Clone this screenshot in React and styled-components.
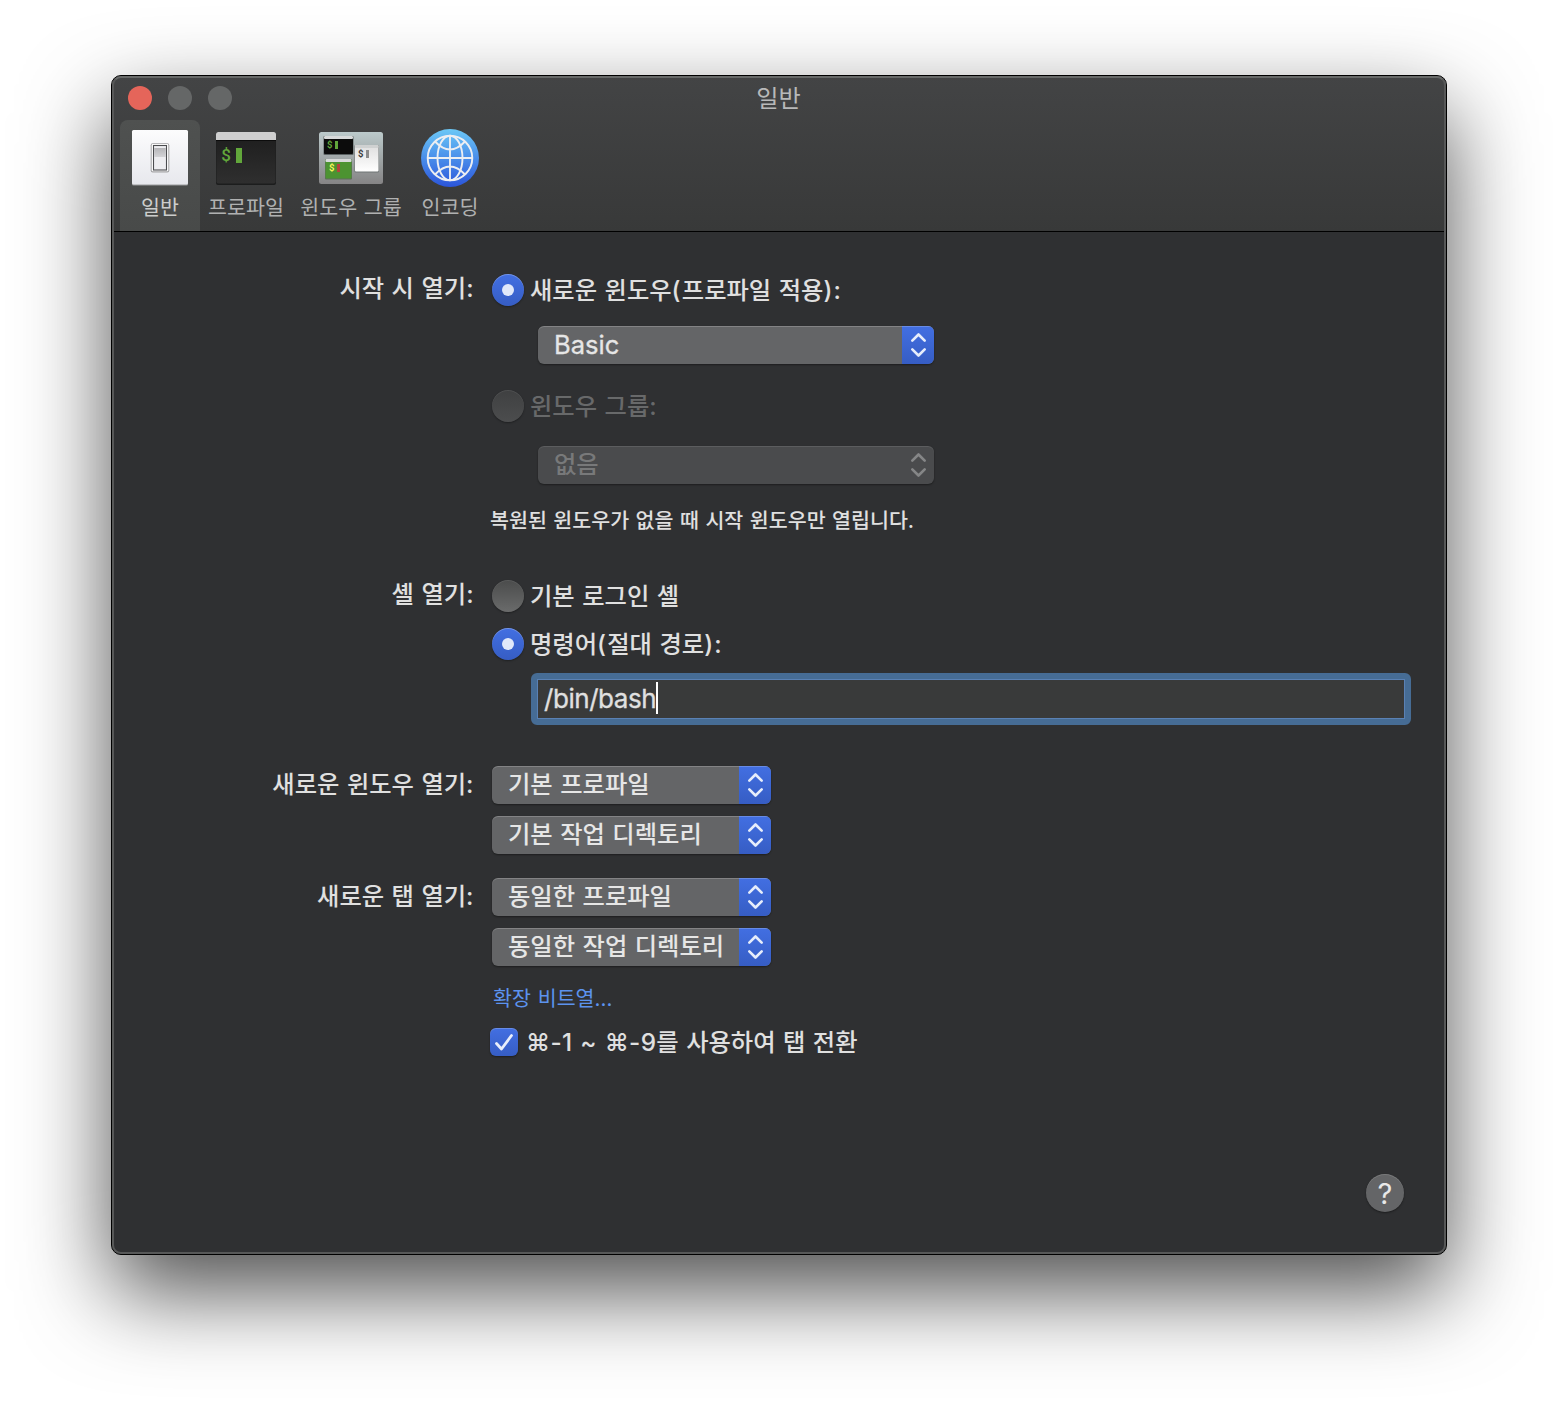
import React from 'react';
import styled, { createGlobalStyle, css } from 'styled-components';

const GlobalStyle = createGlobalStyle`
  * { box-sizing: border-box; }
  html, body { margin: 0; padding: 0; background: #fff; }
  body {
    font-family: Inter, "Noto Sans CJK KR", sans-serif;
    -webkit-font-smoothing: antialiased;
    overflow: hidden;
  }
`;

const Desktop = styled.main`
  height: 1402px;
  padding: 75px 111px 0;
  background: #fff;
  overflow: hidden;
`;

const Window = styled.section`
  position: relative;
  width: 1336px;
  height: 1180px;
  border: 1px solid #000;
  border-radius: 10px;
  background: #2f3032;
  color: #e0e0e0;
  box-shadow: 0 37px 88px rgba(0, 0, 0, 0.69);

  &::after {
    content: '';
    position: absolute;
    inset: 0;
    border: 2px solid #575858;
    border-top-color: #686a69;
    border-radius: 9px;
    pointer-events: none;
  }
`;

const Header = styled.header`
  height: 156px;
  border-bottom: 1px solid #000;
  border-radius: 9px 9px 0 0;
  background: linear-gradient(#434445, #383939);
`;

const TitleBar = styled.div`
  display: grid;
  grid-template-columns: 1fr auto 1fr;
  align-items: center;
  height: 44px;
  padding: 0 17px 0 16px;
`;

const Lights = styled.div`
  display: flex;
  gap: 16px;
`;

const Light = styled.span`
  width: 24px;
  height: 24px;
  border-radius: 50%;
  background: ${({ $color }) => $color};
`;

const Title = styled.h1`
  margin: 0;
  padding-top: 2px;
  font-size: 24.2px;
  font-weight: 400;
  line-height: 36px;
  color: #b8b9b9;
`;

const Toolbar = styled.nav`
  display: flex;
  height: 111px;
  padding-left: 8px;
`;

const Tab = styled.div`
  display: flex;
  flex-direction: column;
  align-items: center;
  width: ${({ $width }) => $width}px;
  padding-top: 6px;
  border-radius: 8px 8px 0 0;
  color: ${({ $active }) => ($active ? '#cccdcc' : '#b0b1b1')};
  ${({ $active }) => $active && css`background: linear-gradient(#4f5150, #484a49);`}
`;

const TabLabel = styled.span`
  margin-top: 3px;
  font-size: 20.6px;
  line-height: 30px;
  word-spacing: 1px;
  white-space: nowrap;
`;

const Body = styled.div`
  padding-top: 42px;
`;

const Section = styled.div`
  display: grid;
  grid-template-columns: 362px 1fr;
  column-gap: 16px;
  margin-top: ${({ $top = 0 }) => $top}px;
`;

const labelText = css`
  font-size: 24.3px;
  font-weight: 500;
  word-spacing: 1px;
  white-space: nowrap;
`;

const Label = styled.span`
  ${labelText}
  line-height: ${({ $line = 28 }) => $line}px;
  height: 28px;
  padding-right: 0.5px;
  text-align: right;
`;

const Controls = styled.div`
  display: flex;
  flex-direction: column;
  align-items: flex-start;
`;

const RadioRow = styled.label`
  ${labelText}
  display: flex;
  align-items: center;
  gap: 6px;
  height: 32px;
  line-height: 32px;
  margin: ${({ $top = 0 }) => $top}px 0 0 2px;
  color: ${({ $disabled }) => ($disabled ? '#68696a' : 'inherit')};
`;

const Paren = styled.span`
  letter-spacing: 1.2px;
`;

const radioFill = {
  on: 'linear-gradient(#426fe2, #365dc4)',
  off: 'linear-gradient(#4b4c4c, #6a6b6b)',
  disabled: 'linear-gradient(#3f4041, #4c4d4e)',
};

const RadioDot = styled.span`
  display: grid;
  place-items: center;
  width: 32px;
  height: 32px;
  border-radius: 50%;
  background: ${({ $state }) => radioFill[$state]};
  box-shadow: 0 1px 2px rgba(0, 0, 0, 0.35),
    inset 0 1px 0 rgba(255, 255, 255, ${({ $state }) => ($state === 'on' ? 0.25 : 0.08)});

  &::after {
    content: '';
    width: 12px;
    height: 12px;
    border-radius: 50%;
    background: ${({ $state }) => ($state === 'on' ? '#e0e8fa' : 'transparent')};
  }
`;

const SelectBox = styled.div`
  display: flex;
  justify-content: space-between;
  width: ${({ $width }) => $width}px;
  height: 38px;
  margin: ${({ $top = 0 }) => $top}px 0 0 ${({ $left = 2 }) => $left}px;
  padding-left: 16px;
  overflow: hidden;
  border-radius: 6px;
  background: ${({ $disabled }) => ($disabled ? '#4a4b4d' : '#646567')};
  color: ${({ $disabled }) => ($disabled ? '#78797a' : '#e6e6e6')};
  box-shadow: 0 1px 2px rgba(0, 0, 0, 0.4),
    inset 0 1px 0 rgba(255, 255, 255, ${({ $disabled }) => ($disabled ? 0.1 : 0.2)});
`;

const SelectText = styled.span`
  ${labelText}
  line-height: 36px;
  ${({ $latin }) => $latin && css`
    font-size: 25.5px;
    -webkit-text-stroke: 0.3px currentColor;
    font-weight: 400;
    line-height: 38px;
  `}
`;

const Stepper = styled.span`
  width: 32px;
  height: 38px;
  background: ${({ $disabled }) => ($disabled ? 'none' : 'linear-gradient(#426fe2, #365dc4)')};
  color: ${({ $disabled }) => ($disabled ? '#858687' : '#e6edfb')};
  box-shadow: ${({ $disabled }) => ($disabled ? 'none' : 'inset 0 1px 0 rgba(255, 255, 255, 0.2)')};
`;

const Note = styled.p`
  margin: 25px 0 -1px;
  font-size: 20.6px;
  font-weight: 500;
  line-height: 24px;
  word-spacing: 1px;
  white-space: nowrap;
`;

const PathField = styled.div`
  display: flex;
  align-items: center;
  width: 880px;
  height: 52px;
  margin: 13px 0 0 41px;
  padding: 0 7px;
  border: 6px solid #466c95;
  border-radius: 6px;
  background: #393a3a;
  box-shadow: inset 0 0 0 1px #5a81b4;
  font-size: 26px;
  line-height: 32px;
  letter-spacing: -0.45px;
  -webkit-text-stroke: 0.3px currentColor;
`;

const Caret = styled.span`
  width: 2px;
  height: 32px;
  margin-top: -2px;
  background: #fff;
`;

const Link = styled.a`
  margin: 21px 0 -1px 3px;
  font-size: 20.6px;
  line-height: 24px;
  word-spacing: 1px;
  color: #5c93ee;
`;

const CheckRow = styled.label`
  ${labelText}
  display: flex;
  align-items: center;
  gap: 8px;
  height: 28px;
  margin-top: 18px;
  line-height: 28px;
`;

const Shortcut = styled.span`
  letter-spacing: 0.35px;
`;

const CheckBox = styled.span`
  width: 28px;
  height: 28px;
  border-radius: 6px;
  background: linear-gradient(#426fe2, #365dc4);
  box-shadow: 0 1px 2px rgba(0, 0, 0, 0.4), inset 0 1px 0 rgba(255, 255, 255, 0.2);
`;

const Footer = styled.footer`
  display: flex;
  justify-content: flex-end;
  padding: 118px 42px 0 0;
`;

const HelpButton = styled.span`
  width: 38px;
  height: 38px;
  border-radius: 50%;
  background: #646567;
  box-shadow: 0 1px 2px rgba(0, 0, 0, 0.4), inset 0 1px 0 rgba(255, 255, 255, 0.15);
  font-size: 29px;
  line-height: 39px;
  text-align: center;
  color: #e8e8e8;
`;

const Icon = styled.svg`
  display: block;
  flex: none;
`;

function SwitchIcon() {
  return (
    <Icon width="64" height="64" viewBox="0 0 64 64">
      <defs>
        <linearGradient id="plate" x1="0" y1="0" x2="0" y2="1">
          <stop offset="0" stopColor="#fcfcfd" />
          <stop offset="1" stopColor="#e7e8ed" />
        </linearGradient>
        <linearGradient id="rocker" x1="0" y1="0" x2="0" y2="1">
          <stop offset="0" stopColor="#b5b5b8" />
          <stop offset="1" stopColor="#d3d3d6" />
        </linearGradient>
      </defs>
      <rect x="4" y="5" width="56" height="54.5" rx="1.5" fill="#9a9b9c" />
      <rect x="4" y="4" width="56" height="54.5" rx="1.5" fill="url(#plate)" />
      <rect x="22.7" y="17.2" width="18.600" height="29.300" rx="2" fill="#a4a4a6" />
      <rect x="23.7" y="18" width="16.600" height="27.300" rx="1" fill="#fff" />
      <rect x="25.5" y="19.5" width="13" height="24.500" fill="#ededf0" stroke="#4b4c4f" strokeWidth="1.1" />
      <rect x="26.2" y="22" width="11.6" height="9" fill="url(#rocker)" />
    </Icon>
  );
}

function ProfileIcon() {
  return (
    <Icon width="64" height="64" viewBox="0 0 64 64">
      <defs>
        <linearGradient id="term" x1="0" y1="0" x2="0" y2="1">
          <stop offset="0" stopColor="#1e1e1e" />
          <stop offset="1" stopColor="#2f2f2f" />
        </linearGradient>
      </defs>
      <rect x="2" y="7" width="60" height="52" rx="2" fill="#1c1d1d" />
      <rect x="2.5" y="10" width="59" height="47.500" rx="2" fill="url(#term)" />
      <path d="M2 14V8.500Q2 6 4.500 6H59.500Q62 6 62 8.500V14Z" fill="#cfcfcf" />
      <rect x="2" y="14" width="60" height="1" fill="#0c0c0c" />
      <text x="7.300" y="35" fontFamily="Roboto" fontWeight="500" fontSize="17" fill="#62a73b">$</text>
      <rect x="22" y="22" width="6" height="15" fill="#62a73b" />
    </Icon>
  );
}

function GroupsIcon() {
  return (
    <Icon width="64" height="64" viewBox="0 0 64 64">
      <defs>
        <linearGradient id="desk" x1="0" y1="0" x2="0" y2="1">
          <stop offset="0" stopColor="#bccacb" />
          <stop offset="1" stopColor="#858485" />
        </linearGradient>
        <linearGradient id="paper" x1="0" y1="0" x2="0" y2="1">
          <stop offset="0" stopColor="#dedede" />
          <stop offset="1" stopColor="#fff" />
        </linearGradient>
      </defs>
      <rect x="0" y="6" width="64" height="52" rx="2.500" fill="url(#desk)" />
      <rect x="4.500" y="10" width="30" height="19" rx="1" fill="#5b6263" />
      <rect x="5" y="10" width="29" height="18" rx="1" fill="#0c0c0c" />
      <rect x="5" y="10" width="29" height="3" rx="1" fill="#d8dada" />
      <text x="8" y="22.300" fontFamily="Roboto" fontWeight="700" fontSize="9.500" fill="#62a73b">$</text>
      <rect x="16" y="15" width="3" height="8" fill="#62a73b" />
      <rect x="35.500" y="19" width="24.500" height="27.500" rx="1" fill="#6f7575" />
      <rect x="36" y="19" width="23.500" height="26.500" rx="1" fill="url(#paper)" />
      <rect x="36" y="19" width="23.500" height="3" rx="1" fill="#cfd1d1" />
      <text x="39" y="31.300" fontFamily="Roboto" fontWeight="700" fontSize="9.500" fill="#3a3a3a">$</text>
      <rect x="47" y="24" width="3" height="8" fill="#8b8b8b" />
      <rect x="6" y="33" width="27" height="20.500" rx="1" fill="#5f6a5c" />
      <rect x="6.500" y="33" width="26" height="19.500" rx="1" fill="#4c9331" />
      <rect x="6.500" y="33" width="26" height="3" rx="1" fill="#d8dada" />
      <text x="10" y="45.300" fontFamily="Roboto" fontWeight="700" fontSize="9.500" fill="#f8f85a">$</text>
      <rect x="18" y="38" width="3" height="8" fill="#b5443c" />
    </Icon>
  );
}

function GlobeIcon() {
  return (
    <Icon width="64" height="64" viewBox="0 0 64 64">
      <defs>
        <linearGradient id="sea" x1="0" y1="0" x2="0" y2="1">
          <stop offset="0" stopColor="#6cc8f6" />
          <stop offset="0.5" stopColor="#4a8eea" />
          <stop offset="1" stopColor="#2b55da" />
        </linearGradient>
      </defs>
      <circle cx="32" cy="32" r="29" fill="url(#sea)" />
      <g fill="none" stroke="#eceef2" strokeWidth="1.900">
        <circle cx="32" cy="32" r="22.300" />
        <ellipse cx="32" cy="32" rx="12.500" ry="22.300" />
        <path d="M32 9.700V54.300M9.700 32H54.300M17 15.500Q32 31.500 47 15.500M17 48.500Q32 32.500 47 48.500" />
      </g>
    </Icon>
  );
}

function Radio({ state, top, children }) {
  return (
    <RadioRow $top={top} $disabled={state === 'disabled'}>
      <RadioDot $state={state} />
      <span>{children}</span>
    </RadioRow>
  );
}

function Select({ width = 279, top, left, disabled, latin, children }) {
  return (
    <SelectBox $width={width} $top={top} $left={left} $disabled={disabled}>
      <SelectText $latin={latin}>{children}</SelectText>
      <Stepper $disabled={disabled}>
        <Icon width="32" height="38" viewBox="0 0 32 38" fill="none" stroke="currentColor" strokeWidth="2.600" strokeLinecap="round" strokeLinejoin="round">
          <path d="M10.300 14.700L16.500 8.500L22.700 14.700M10.300 23.300L16.500 29.500L22.700 23.300" />
        </Icon>
      </Stepper>
    </SelectBox>
  );
}

const tabs = [
  { label: '일반', width: 80, icon: SwitchIcon, active: true },
  { label: '프로파일', width: 92, icon: ProfileIcon },
  { label: '윈도우 그룹', width: 118, icon: GroupsIcon },
  { label: '인코딩', width: 80, icon: GlobeIcon },
];

export default function App() {
  return (
    <Desktop>
      <GlobalStyle />
      <Window>
        <Header>
          <TitleBar>
            <Lights>
              <Light $color="#e5655a" />
              <Light $color="#656767" />
              <Light $color="#656767" />
            </Lights>
            <Title>일반</Title>
          </TitleBar>
          <Toolbar>
            {tabs.map(({ label, width, icon: TabIcon, active }) => (
              <Tab key={label} $width={width} $active={active}>
                <TabIcon />
                <TabLabel>{label}</TabLabel>
              </Tab>
            ))}
          </Toolbar>
        </Header>
        <Body>
          <Section>
            <Label>시작 시 열기:</Label>
            <Controls>
              <Radio state="on">새로운 윈도우<Paren>(</Paren>프로파일 적용<Paren>):</Paren></Radio>
              <Select width={396} top={20} left={48} latin>Basic</Select>
              <Radio state="disabled" top={26}>윈도우 그룹:</Radio>
              <Select width={396} top={24} left={48} disabled>없음</Select>
              <Note>복원된 윈도우가 없을 때 시작 윈도우만 열립니다.</Note>
            </Controls>
          </Section>
          <Section $top={48}>
            <Label>셸 열기:</Label>
            <Controls>
              <Radio state="off">기본 로그인 셸</Radio>
              <Radio state="on" top={16}>명령어<Paren>(</Paren>절대 경로<Paren>):</Paren></Radio>
              <PathField>/bin/bash<Caret /></PathField>
            </Controls>
          </Section>
          <Section $top={41}>
            <Label $line={36}>새로운 윈도우 열기:</Label>
            <Controls>
              <Select>기본 프로파일</Select>
              <Select top={12}>기본 작업 디렉토리</Select>
            </Controls>
          </Section>
          <Section $top={24}>
            <Label $line={36}>새로운 탭 열기:</Label>
            <Controls>
              <Select>동일한 프로파일</Select>
              <Select top={12}>동일한 작업 디렉토리</Select>
              <Link>확장 비트열...</Link>
              <CheckRow>
                <CheckBox>
                  <Icon width="28" height="28" viewBox="0 0 28 28" fill="none" stroke="#e8eefb" strokeWidth="2.800" strokeLinecap="round" strokeLinejoin="round">
                    <path d="M6.500 15.500L11.500 21L21.500 7.500" />
                  </Icon>
                </CheckBox>
                <span><Shortcut>⌘-1 ~ ⌘-9</Shortcut>를 사용하여 탭 전환</span>
              </CheckRow>
            </Controls>
          </Section>
          <Footer>
            <HelpButton>?</HelpButton>
          </Footer>
        </Body>
      </Window>
    </Desktop>
  );
}
